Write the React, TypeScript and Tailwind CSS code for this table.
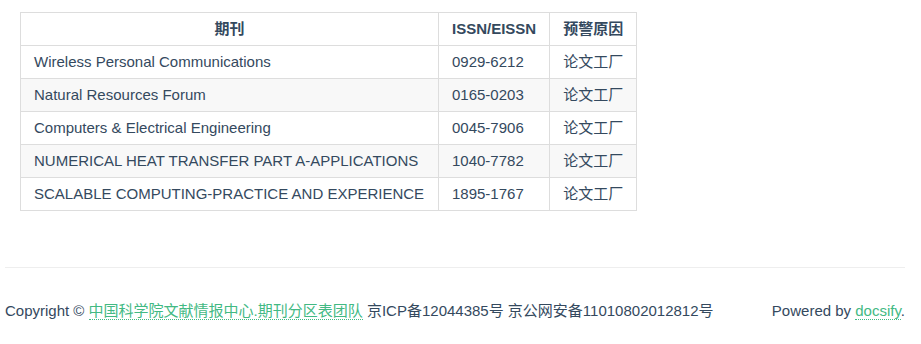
const rows = [
  ['Wireless Personal Communications', '0929-6212'],
  ['Natural Resources Forum', '0165-0203'],
  ['Computers & Electrical Engineering', '0045-7906'],
  ['NUMERICAL HEAT TRANSFER PART A-APPLICATIONS', '1040-7782'],
  ['SCALABLE COMPUTING-PRACTICE AND EXPERIENCE', '1895-1767'],
];

const font = "font-['Liberation_Sans','Noto_Sans_CJK_SC',sans-serif]";

export default function App() {
  return (
    <div className={`h-[344px] w-[921px] bg-white text-[15px] text-[#34495e] ${font}`}>
      <div className="pl-5 pt-3">
        <table className="border-collapse leading-5">
          <thead>
            <tr>
              <th className="h-[33px] w-[418px] border border-[#ddd] px-[13px] font-bold">期刊</th>
              <th className="w-[111px] border border-[#ddd] px-[13px] font-bold">ISSN/EISSN</th>
              <th className="w-[87px] border border-[#ddd] px-[13px] font-bold">预警原因</th>
            </tr>
          </thead>
          <tbody>
            {rows.map(([name, issn], i) => (
              <tr key={issn} className={i % 2 === 1 ? 'bg-[#f8f8f8]' : ''}>
                <td className="h-[33px] border border-[#ddd] px-[13px]">{name}</td>
                <td className="border border-[#ddd] px-[13px]">{issn}</td>
                <td className="border border-[#ddd] px-[13px]">论文工厂</td>
              </tr>
            ))}
          </tbody>
        </table>
      </div>
      <div className="mx-[5px] mt-[56px] w-[900px] border-t border-[#eee]" />
      <div className="mx-[5px] mt-[32px] flex w-[900px] items-center justify-between">
        <span>
          Copyright ©{' '}
          <a className="border-b border-dotted border-[#42b983] text-[#42b983]">中国科学院文献情报中心.期刊分区表团队</a>{' '}
          京ICP备12044385号 京公网安备11010802012812号
        </span>
        <span>
          Powered by{' '}
          <a className="border-b border-dotted border-[#42b983] text-[#42b983]">docsify</a>.
        </span>
      </div>
    </div>
  );
}
